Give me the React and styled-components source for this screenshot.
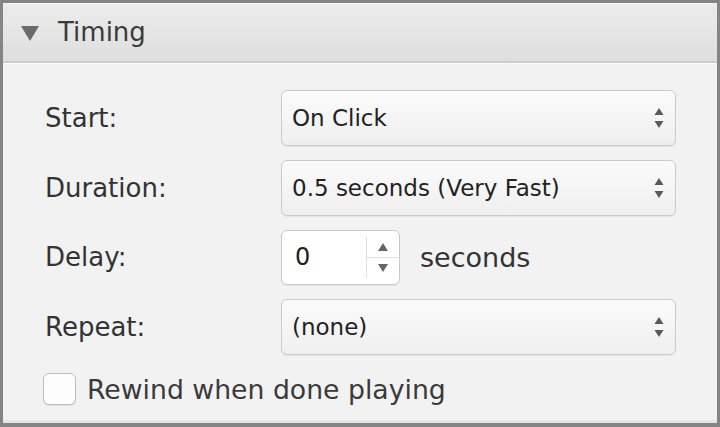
import React, { useState } from 'react';
import styled, { createGlobalStyle } from 'styled-components';

const GlobalStyle = createGlobalStyle`
  html, body {
    margin: 0;
    padding: 0;
    background: #f2f2f2;
  }
  body {
    font-family: "DejaVu Sans", "Liberation Sans", sans-serif;
  }
`;

const Arrows = () => (
  <svg width="10" height="22" viewBox="0 0 10 22">
    <path d="M5 1 L9.5 8 L0.5 8 Z" fill="#5a5a5a" />
    <path d="M5 21 L9.5 14 L0.5 14 Z" fill="#5a5a5a" />
  </svg>
);

const Timing = () => {
  const [rewind, setRewind] = useState(false);
  return (
    <Panel>
      <Header>
        <Disclosure viewBox="0 0 18 15" width="18" height="15">
          <path d="M0 0 L18 0 L9 15 Z" fill="#6a6a6a" />
        </Disclosure>
        <HeaderTitle>Timing</HeaderTitle>
      </Header>
      <Body>
        <Label>Start:</Label>
        <Select>
          <SelectText>On Click</SelectText>
          <Arrows />
        </Select>

        <Label>Duration:</Label>
        <Select>
          <SelectText>0.5 seconds (Very Fast)</SelectText>
          <Arrows />
        </Select>

        <Label>Delay:</Label>
        <DelayRow>
          <Stepper>
            <StepValue>0</StepValue>
            <StepButtons>
              <StepButton>
                <svg width="10" height="8" viewBox="0 0 10 8"><path d="M5 0 L10 8 L0 8 Z" fill="#666" /></svg>
              </StepButton>
              <StepButton $bottom>
                <svg width="10" height="8" viewBox="0 0 10 8"><path d="M5 8 L10 0 L0 0 Z" fill="#666" /></svg>
              </StepButton>
            </StepButtons>
          </Stepper>
          <Unit>seconds</Unit>
        </DelayRow>

        <Label>Repeat:</Label>
        <Select>
          <SelectText>(none)</SelectText>
          <Arrows />
        </Select>

        <CheckRow onClick={() => setRewind(!rewind)}>
          <CheckBox $checked={rewind} />
          <CheckLabel>Rewind when done playing</CheckLabel>
        </CheckRow>
      </Body>
    </Panel>
  );
};

export default function App() {
  return (
    <>
      <GlobalStyle />
      <Timing />
    </>
  );
}

const Panel = styled.div`
  width: 720px;
  height: 427px;
  box-sizing: border-box;
  border: 3px solid #858585;
  border-bottom-width: 4px;
  background: #f2f2f2;
  display: flex;
  flex-direction: column;
  overflow: hidden;
`;

const Header = styled.div`
  flex-shrink: 0;
  height: 60px;
  box-sizing: border-box;
  display: flex;
  align-items: center;
  gap: 19px;
  padding-left: 18px;
  background: linear-gradient(#ececec, #dedede);
  border-top: 1px solid #f6f6f6;
  border-bottom: 2px solid #cdcdcd;
  box-shadow: 0 1px 0 #fafafa;
`;

const Disclosure = styled.svg`
  margin-top: 2px;
`;

const HeaderTitle = styled.span`
  font-size: 26px;
  color: #3a3a3a;
  margin-bottom: 2px;
`;

const Body = styled.div`
  flex: 1;
  min-height: 0;
  display: grid;
  grid-template-columns: 236px 395px;
  grid-auto-rows: 56px;
  row-gap: 13.5px;
  align-content: start;
  align-items: center;
  padding: 27px 0 0 42px;
  border-bottom: 3px solid #e6e6e6;
`;

const Label = styled.div`
  font-size: 26px;
  color: #333;
`;

const Select = styled.div`
  height: 56px;
  box-sizing: border-box;
  display: flex;
  align-items: center;
  justify-content: space-between;
  padding: 0 11px 0 10px;
  border: 1px solid #cbcbcb;
  border-radius: 6px;
  background: linear-gradient(#fbfbfb, #efefef);
  box-shadow: 0 1px 1px rgba(0, 0, 0, 0.06);
`;

const SelectText = styled.span`
  font-size: 23px;
  color: #222;
`;

const DelayRow = styled.div`
  display: flex;
  align-items: center;
  gap: 20px;
`;

const Stepper = styled.div`
  width: 119px;
  height: 55px;
  box-sizing: border-box;
  display: flex;
  border: 1px solid #c9c9c9;
  border-radius: 6px;
  background: #fff;
  box-shadow: 0 1px 1px rgba(0, 0, 0, 0.06);
`;

const StepValue = styled.div`
  flex: 1;
  display: flex;
  align-items: center;
  padding-left: 13px;
  font-size: 24px;
  color: #222;
`;

const StepButtons = styled.div`
  width: 32px;
  display: flex;
  flex-direction: column;
  border-left: 1px solid #e0e0e0;
  margin: 6px 0;
`;

const StepButton = styled.div`
  flex: 1;
  display: flex;
  align-items: center;
  justify-content: center;
  border-top: ${p => (p.$bottom ? '1px solid #e0e0e0' : 'none')};
`;

const Unit = styled.span`
  font-size: 27px;
  color: #333;
`;

const CheckRow = styled.div`
  grid-column: 1 / span 2;
  align-self: start;
  display: flex;
  align-items: center;
  gap: 11px;
  margin-top: 5px;
  margin-left: -2px;
`;

const CheckBox = styled.div`
  width: 33px;
  height: 32px;
  box-sizing: border-box;
  border: 1px solid #bdbdbd;
  border-radius: 6px;
  background: ${p => (p.$checked ? '#4a90e2' : '#fdfdfd')};
  box-shadow: 0 1px 1px rgba(0, 0, 0, 0.08);
`;

const CheckLabel = styled.span`
  font-size: 26.7px;
  color: #3a3a3a;
`;
